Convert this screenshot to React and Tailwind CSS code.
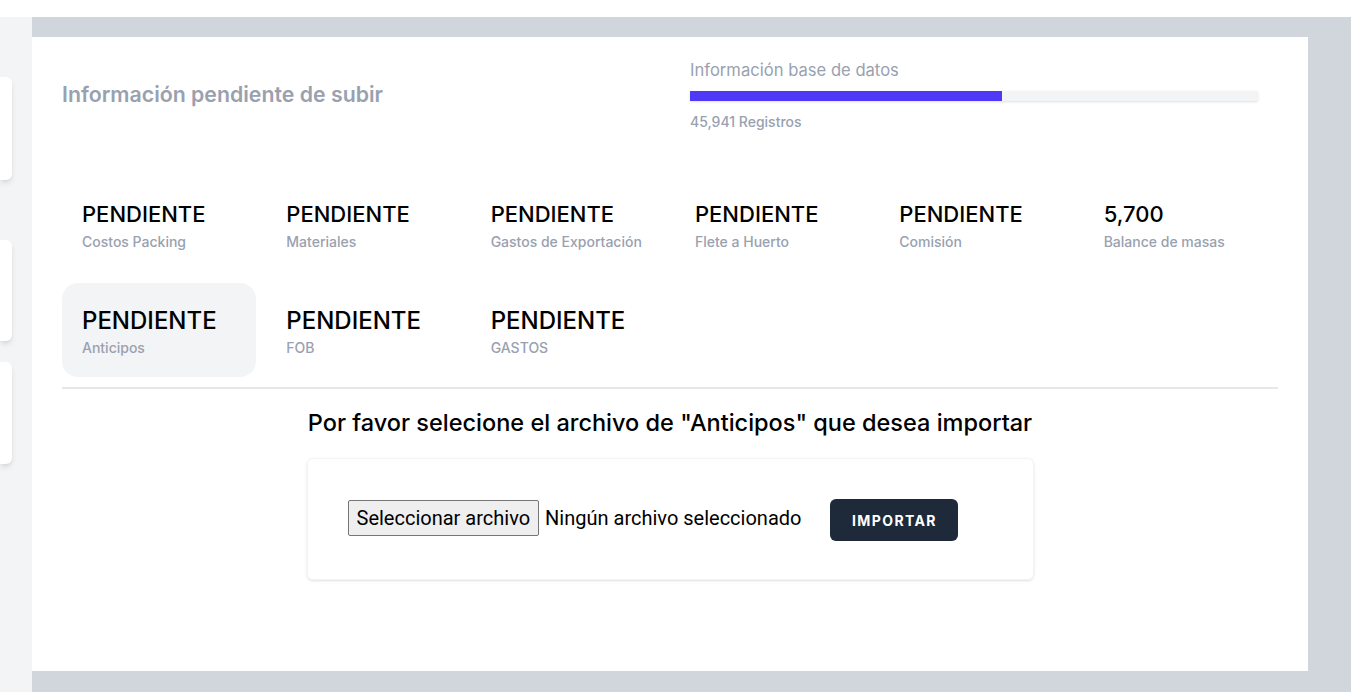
import React from 'react';

const stats = [
  { value: 'PENDIENTE', label: 'Costos Packing' },
  { value: 'PENDIENTE', label: 'Materiales' },
  { value: 'PENDIENTE', label: 'Gastos de Exportación' },
  { value: 'PENDIENTE', label: 'Flete a Huerto' },
  { value: 'PENDIENTE', label: 'Comisión' },
  { value: '5,700', label: 'Balance de masas' },
];

const stats2 = [
  { value: 'PENDIENTE', label: 'Anticipos', active: true },
  { value: 'PENDIENTE', label: 'FOB' },
  { value: 'PENDIENTE', label: 'GASTOS' },
];

const StatCell = ({ value, label, active, big }) => (
  <div className={`h-[94px] rounded-2xl px-5 flex flex-col justify-center ${active ? 'bg-gray-100' : ''}`}>
    <div className={`${big ? 'text-[24px] mt-1' : 'text-[22px] mt-0.5'} font-medium leading-7 text-black`}>{value}</div>
    <div className={`text-sm font-medium text-gray-400 leading-5 ${big ? 'mt-[3px]' : 'mt-1'}`}>{label}</div>
  </div>
);

export default function App() {
  return (
    <div className="w-[1351px] h-[692px] flex flex-col bg-white font-['Inter',sans-serif] overflow-hidden">
      <div className="h-[17px] bg-white shrink-0" />
      <div className="flex flex-1">
        {/* sidebar strip */}
        <div className="w-8 bg-gray-100 flex flex-col pt-[60px] shrink-0">
          <div className="w-3 h-[103px] bg-white rounded-r-md shadow-md" />
          <div className="w-3 h-[101px] bg-white rounded-r-md shadow-md mt-[60px]" />
          <div className="w-3 h-[102px] bg-white rounded-r-md shadow-md mt-[21px]" />
        </div>

        <div className="flex-1 bg-gray-300 pt-5 pr-[43px] pb-[21px]">
          <div className="h-full bg-white px-[30px] pt-[21px]">
            {/* header */}
            <div className="grid grid-cols-2 items-center h-[74px]">
              <h2 className="text-[21.3px] font-semibold text-gray-400">Información pendiente de subir</h2>
              <div className="px-5">
                <div className="text-[16.6px] text-gray-400 leading-6 -mt-px">Información base de datos</div>
                <div className="mt-[9px] h-[10px] bg-gray-100 shadow-sm">
                  <div className="h-full bg-indigo-600 w-[55%]" />
                </div>
                <div className="mt-[11px] text-[14px] font-medium text-gray-400 leading-5">45,941 Registros</div>
              </div>
            </div>

            {/* stats */}
            <div className="mt-[46px] grid grid-cols-6 gap-x-2.5 gap-y-[11px]">
              {stats.map((s) => (
                <StatCell key={s.label} {...s} />
              ))}
              {stats2.map((s) => (
                <StatCell key={s.label} {...s} big />
              ))}
            </div>
            <div className="mt-2.5 h-0.5 bg-gray-200" />

            {/* import */}
            <div className="flex flex-col items-center mt-5">
              <h3 className="text-[23.5px] font-medium text-black leading-7">
                Por favor selecione el archivo de "Anticipos" que desea importar
              </h3>
              <div className="mt-[21px] w-[727px] h-[122px] rounded-md border border-gray-100 shadow-sm px-10 pt-10 flex items-start">
                <div className="mt-px flex items-center font-['Roboto',Arial,sans-serif] text-[20px] text-black">
                  <span className="h-9 px-2 flex items-center bg-[#efefef] border border-[#767676] rounded-[2px]">
                    Seleccionar archivo
                  </span>
                  <span className="ml-1.5">Ningún archivo seleccionado</span>
                </div>
                <button className="ml-[29px] h-[42px] w-32 bg-gray-800 rounded-md text-white text-[14px] font-bold tracking-widest">
                  IMPORTAR
                </button>
              </div>
            </div>
          </div>
        </div>
      </div>
    </div>
  );
}
